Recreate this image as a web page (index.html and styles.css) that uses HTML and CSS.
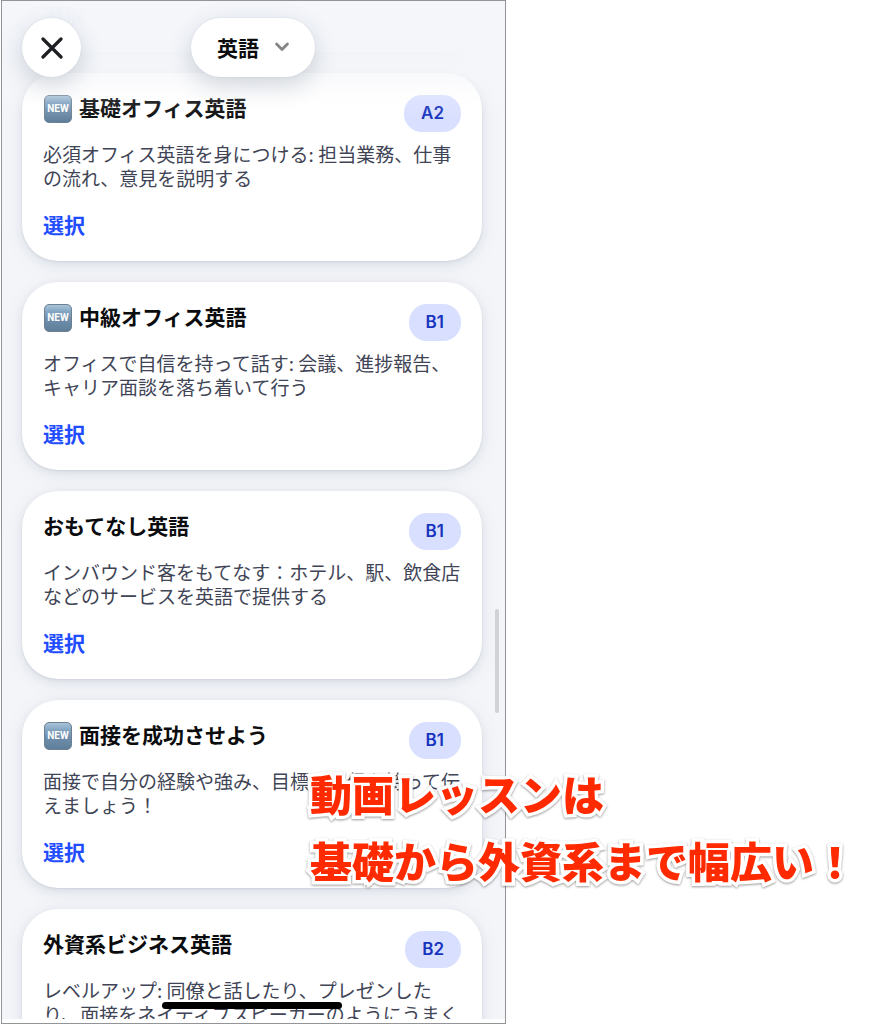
FILE: index.html
```html
<!DOCTYPE html>
<html lang="ja">
<head>
<meta charset="utf-8">
<meta name="viewport" content="width=device-width, initial-scale=1">
<title>英語レッスン</title>
<link rel="stylesheet" href="styles.css">
</head>
<body>
<div class="stage">
  <main class="phone">
    <div class="screen">
      <header class="topbar">
        <button class="close" type="button" aria-label="閉じる">
          <svg width="22" height="22" viewBox="0 0 22 22" fill="none" stroke="#1d1f22" stroke-width="3.2" stroke-linecap="round"><path d="M2 2L20 20M20 2L2 20"/></svg>
        </button>
        <button class="language" type="button">英語
          <svg width="14" height="10" viewBox="0 0 14 10" fill="none" stroke="#858585" stroke-width="2.8" stroke-linecap="round" stroke-linejoin="round"><path d="M1.6 2L7 7.4L12.4 2"/></svg>
        </button>
      </header>
      <section class="list">
        <article class="card card-tail"><a class="select" href="#">選択</a></article>
        <article class="card">
          <div class="head"><h2 class="title"><span class="new">NEW</span>基礎オフィス英語</h2><span class="level">A2</span></div>
          <p class="desc">必須オフィス英語を身につける: 担当業務、仕事の流れ、意見を説明する</p>
          <a class="select" href="#">選択</a>
        </article>
        <article class="card">
          <div class="head"><h2 class="title"><span class="new">NEW</span>中級オフィス英語</h2><span class="level">B1</span></div>
          <p class="desc">オフィスで自信を持って話す: 会議、進捗報告、キャリア面談を落ち着いて行う</p>
          <a class="select" href="#">選択</a>
        </article>
        <article class="card">
          <div class="head"><h2 class="title">おもてなし英語</h2><span class="level">B1</span></div>
          <p class="desc">インバウンド客をもてなす：ホテル、駅、飲食店などのサービスを英語で提供する</p>
          <a class="select" href="#">選択</a>
        </article>
        <article class="card">
          <div class="head"><h2 class="title"><span class="new">NEW</span>面接を成功させよう</h2><span class="level">B1</span></div>
          <p class="desc">面接で自分の経験や強み、目標を自信を持って伝えましょう！</p>
          <a class="select" href="#">選択</a>
        </article>
        <article class="card">
          <div class="head"><h2 class="title">外資系ビジネス英語</h2><span class="level">B2</span></div>
          <p class="desc">レベルアップ: 同僚と話したり、プレゼンしたり、面接をネイティブスピーカーのようにうまく</p>
          <a class="select" href="#">選択</a>
        </article>
      </section>
      <span class="scroll-thumb"></span>
      <span class="home-bar"></span>
    </div>
  </main>
  <p class="caption">動画レッスンは<br>基礎から外資系まで幅広い！</p>
</div>
</body>
</html>
```

FILE: styles.css
```css
* { box-sizing: border-box; }

body {
  margin: 0;
  background: #fff;
  color: #0b0c0e;
  font-family: "Noto Sans CJK JP", sans-serif;
}

.stage {
  position: relative;
  display: grid;
  grid-template-columns: 506fr 371fr;
  height: 100vh;
  overflow: hidden;
}

.phone {
  height: 100vh;
  margin-left: 1px;
  padding-bottom: 4px;
  border: 1px solid #929498;
}

.screen {
  position: relative;
  height: 100%;
  overflow: hidden;
  background: #f3f5f9;
}

.topbar {
  position: absolute;
  z-index: 2;
  inset: 0 0 auto;
  display: grid;
  grid-template-columns: 1fr auto 1fr;
  align-items: start;
  height: 140px;
  padding: 17px 21px 0 20px;
  background: linear-gradient(rgba(244, 246, 250, 0.98) 0, rgba(244, 246, 250, 0.96) 50px, rgba(246, 247, 250, 0.6) 76px, rgba(250, 251, 252, 0.12) 100px, rgba(255, 255, 255, 0) 120px);
}

.close,
.language {
  display: flex;
  align-items: center;
  justify-content: center;
  height: 59px;
  padding: 0;
  border: 0;
  border-radius: 30px;
  background: #fff;
  box-shadow: 0 8px 24px rgba(40, 60, 85, 0.2), 0 0 2px rgba(40, 60, 85, 0.1);
}

.close { width: 59px; }

.language {
  gap: 16px;
  width: 124px;
  padding-bottom: 2px;
  color: #0b0c0e;
  font: 700 21px/28px "Noto Sans CJK JP", sans-serif;
}

.list {
  display: flex;
  flex-direction: column;
  gap: 21px;
  padding: 0 23px 0 20px;
}

.card {
  flex: none;
  padding: 22px 21px 23px;
  border-radius: 36px;
  background: #fff;
  box-shadow: 0 3px 10px rgba(40, 55, 85, 0.09), 0 1px 2px rgba(40, 55, 85, 0.09), 0 4px 24px rgba(40, 60, 80, 0.05);
}

.card-tail {
  padding-top: 0;
  border-radius: 0 0 36px 36px;
}

.card-tail .select { opacity: 0.4; }

.head {
  display: flex;
  align-items: flex-start;
  justify-content: space-between;
  margin-bottom: 10px;
}

.title {
  display: flex;
  align-items: flex-start;
  gap: 7px;
  margin: 0;
  font-size: 21px;
  line-height: 24px;
}

.new {
  display: flex;
  align-items: center;
  justify-content: center;
  width: 28px;
  height: 28px;
  margin-left: 1px;
  border: 1px solid #6c8193;
  border-radius: 5px;
  background: linear-gradient(#a8c3d9 0, #85a6c3 25%, #6f8eab 55%, #5f7e9a 100%);
  color: #fff;
  font: 700 10px/26px Roboto, sans-serif;
}

.level {
  padding: 0 17px;
  border-radius: 18px;
  background: #d9dfff;
  color: #1634bd;
  font: 600 17px/37px Inter, sans-serif;
}

.desc {
  margin: 0 -2px 20px 0;
  color: #3f4556;
  font-size: 19px;
  line-height: 24px;
}

.select {
  display: block;
  width: max-content;
  color: #1f4dff;
  font-size: 21px;
  font-weight: 700;
  line-height: 28px;
  text-decoration: none;
}

.scroll-thumb {
  position: absolute;
  top: 608px;
  right: 6px;
  width: 4px;
  height: 104px;
  border-radius: 2px;
  background: #d0d2d6;
}

.home-bar {
  position: absolute;
  bottom: 10px;
  left: 50%;
  width: 180px;
  height: 7px;
  margin-left: -92px;
  border-radius: 4px;
  background: #000;
}

.caption {
  position: absolute;
  z-index: 3;
  top: 759px;
  left: 310px;
  margin: 0;
  color: #ff2a00;
  font-size: 42px;
  font-weight: 900;
  line-height: 67px;
  white-space: nowrap;
  paint-order: stroke fill;
  -webkit-text-stroke: 7px #fff;
  filter: drop-shadow(0 1px 1px rgba(0, 0, 0, 0.4));
}
```
